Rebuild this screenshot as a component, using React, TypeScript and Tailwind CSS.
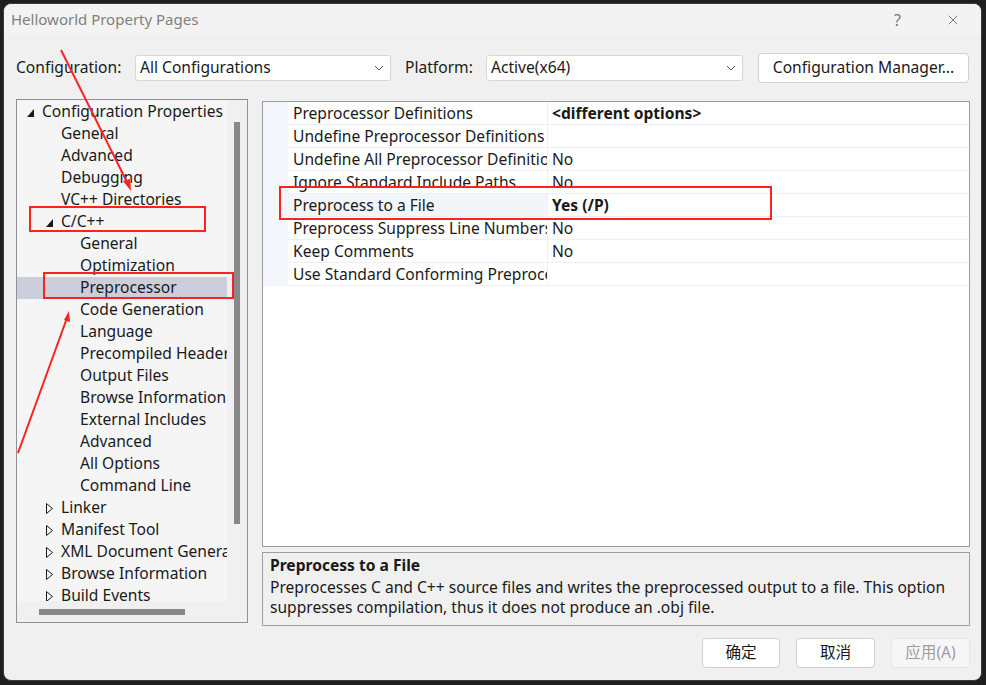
import { X } from "lucide-react";

type TreeItem = { t: string; l: 0 | 1 | 2; exp?: boolean; col?: boolean; sel?: boolean };

const tree: TreeItem[] = [
  { t: "Configuration Properties", l: 0, exp: true },
  { t: "General", l: 1 },
  { t: "Advanced", l: 1 },
  { t: "Debugging", l: 1 },
  { t: "VC++ Directories", l: 1 },
  { t: "C/C++", l: 1, exp: true },
  { t: "General", l: 2 },
  { t: "Optimization", l: 2 },
  { t: "Preprocessor", l: 2, sel: true },
  { t: "Code Generation", l: 2 },
  { t: "Language", l: 2 },
  { t: "Precompiled Headers", l: 2 },
  { t: "Output Files", l: 2 },
  { t: "Browse Information", l: 2 },
  { t: "External Includes", l: 2 },
  { t: "Advanced", l: 2 },
  { t: "All Options", l: 2 },
  { t: "Command Line", l: 2 },
  { t: "Linker", l: 1, col: true },
  { t: "Manifest Tool", l: 1, col: true },
  { t: "XML Document Generator", l: 1, col: true },
  { t: "Browse Information", l: 1, col: true },
  { t: "Build Events", l: 1, col: true },
];

const props = [
  { name: "Preprocessor Definitions", value: "<different options>", bold: true },
  { name: "Undefine Preprocessor Definitions", value: "" },
  { name: "Undefine All Preprocessor Definitions", value: "No" },
  { name: "Ignore Standard Include Paths", value: "No" },
  { name: "Preprocess to a File", value: "Yes (/P)", bold: true, sel: true },
  { name: "Preprocess Suppress Line Numbers", value: "No" },
  { name: "Keep Comments", value: "No" },
  { name: "Use Standard Conforming Preprocessor", value: "" },
];

function Chevron() {
  return (
    <svg width="10" height="6" viewBox="0 0 10 6" className="shrink-0">
      <path d="M1 1 L5 5 L9 1" fill="none" stroke="#555" strokeWidth="1" />
    </svg>
  );
}

function Select({ value, w }: { value: string; w: string }) {
  return (
    <div className={`${w} h-[26px] bg-white border border-[#d6d6d6] rounded-[3px] flex items-center justify-between pl-[4px] pr-[6px]`}>
      <span>{value}</span>
      <Chevron />
    </div>
  );
}

function TreeRow({ item }: { item: TreeItem }) {
  const pad = item.l === 0 ? "pl-[25px]" : item.l === 1 ? "pl-[44px]" : "pl-[63px]";
  return (
    <div className={`relative h-[22px] flex items-center whitespace-nowrap ${pad} ${item.sel ? "bg-[#cccedb]" : ""}`}>
      {item.exp && (
        <svg width="8" height="8" viewBox="0 0 8 8" className={`absolute top-[8px] ${item.l === 0 ? "left-[10px]" : "left-[29px]"}`}>
          <polygon points="7,0 7,8 0,8" fill="#1a1a1a" />
        </svg>
      )}
      {item.col && (
        <svg width="8" height="11" viewBox="0 0 8 11" className="absolute top-[6px] left-[29px]">
          <polygon points="0.5,0.5 0.5,10.5 6.5,5.5" fill="none" stroke="#1a1a1a" strokeWidth="1" />
        </svg>
      )}
      <span>{item.t}</span>
    </div>
  );
}

export default function App() {
  return (
    <div
      className="relative w-[986px] h-[685px] bg-[#1f1f1f] pt-[3px] pl-[3px] text-[15.6px] text-[#1a1a1a] overflow-hidden"
      style={{ fontFamily: '"Noto Sans", "Noto Sans CJK SC", sans-serif' }}
    >
      <div className="w-[979px] h-[678px] bg-[#f0f0f0] rounded-[8px] flex flex-col border border-[#3a3a3a]">
        {/* title bar */}
        <div className="h-[31px] flex items-center justify-between pl-[7px] pr-[20px] bg-[#f3f3f3] rounded-t-[8px]">
          <span className="text-[#808080] text-[15px]">Helloworld Property Pages</span>
          <div className="flex items-center gap-[44px] text-[#777]">
            <span className="text-[16px]">?</span>
            <X size={16} strokeWidth={1.2} color="#555" />
          </div>
        </div>

        {/* configuration row */}
        <div className="mt-[18px] h-[30px] flex items-center pl-[12px] pr-[12px]">
          <span className="w-[119px]">Configuration:</span>
          <Select value="All Configurations" w="w-[256px]" />
          <span className="ml-[14px] w-[81px]">Platform:</span>
          <Select value="Active(x64)" w="w-[257px]" />
          <div className="ml-[15px] w-[211px] h-[30px] bg-white border border-[#d0d0d0] rounded-[4px] flex items-center justify-center">
            Configuration Manager...
          </div>
        </div>

        {/* main row */}
        <div className="mt-[16px] flex pl-[12px] pr-[11px]">
          {/* tree */}
          <div className="w-[232px] h-[524px] border border-[#8e9199] flex flex-col">
            <div className="flex h-[501px]">
              <div className="w-[210px] h-full bg-[#f5f5f5] overflow-hidden pt-[1px]">
                {tree.map((it, i) => (
                  <TreeRow key={i} item={it} />
                ))}
              </div>
              <div className="w-[20px] h-full pt-[22px] pl-[7px]">
                <div className="w-[6px] h-[402px] bg-[#888888]" />
              </div>
            </div>
            <div className="h-[21px] pt-[8px] pl-[22px]">
              <div className="w-[146px] h-[6px] bg-[#888888]" />
            </div>
          </div>

          {/* right column */}
          <div className="ml-[14px] flex-1 pt-[2px] flex flex-col gap-[5px]">
            <div className="h-[446px] bg-white border border-[#9a9a9a]">
              {props.map((p, i) => (
                <div key={i} className="h-[23px] flex">
                  <div className="w-[25px] bg-[#f3f6fb]" />
                  <div
                    className={`w-[259px] pl-[5px] pt-[1px] flex items-center whitespace-nowrap overflow-hidden border-b border-[#eef0f5] ${p.sel ? "bg-[#f2f5fa]" : ""}`}
                  >
                    <span>{p.name}</span>
                  </div>
                  <div
                    className={`flex-1 pl-[4px] pt-[1px] flex items-center border-b border-l border-[#eef0f5] ${p.bold ? "font-bold" : ""}`}
                  >
                    <span>{p.value}</span>
                  </div>
                </div>
              ))}
            </div>
            <div className="h-[74px] border border-[#a0a0a0] bg-[#f0f0f0] px-[7px] pt-[2px] leading-[20px]">
              <div className="font-bold mb-[1px]">Preprocess to a File</div>
              <div className="pt-[1px]">
                Preprocesses C and C++ source files and writes the preprocessed output to a file. This option
                suppresses compilation, thus it does not produce an .obj file.
              </div>
            </div>
          </div>
        </div>

        {/* buttons */}
        <div className="mt-[12px] flex justify-end gap-[16px] pr-[11px]">
          <div className="w-[78px] h-[30px] bg-white border border-[#d0d0d0] rounded-[4px] flex items-center justify-center">
            确定
          </div>
          <div className="w-[79px] h-[30px] bg-white border border-[#d0d0d0] rounded-[4px] flex items-center justify-center">
            取消
          </div>
          <div className="w-[79px] h-[30px] bg-[#f6f6f6] border border-[#e6e6e6] rounded-[4px] flex items-center justify-center text-[#9d9d9d]">
            应用(A)
          </div>
        </div>
      </div>

      {/* red annotations */}
      <svg className="absolute left-0 top-0 pointer-events-none" width="986" height="685">
        <g stroke="#ff2020" strokeWidth="2" fill="none">
          <line x1="61" y1="50" x2="128" y2="184" />
          <line x1="18" y1="453" x2="67" y2="318" />
          <rect x="30" y="207" width="175" height="24" />
          <rect x="44" y="273" width="189" height="25" />
          <rect x="280" y="187" width="491" height="32" />
        </g>
        <g fill="#ff2020">
          <polygon points="131,191 123,181 130,179" />
          <polygon points="69,311 70,322 64,320" />
        </g>
      </svg>
    </div>
  );
}
